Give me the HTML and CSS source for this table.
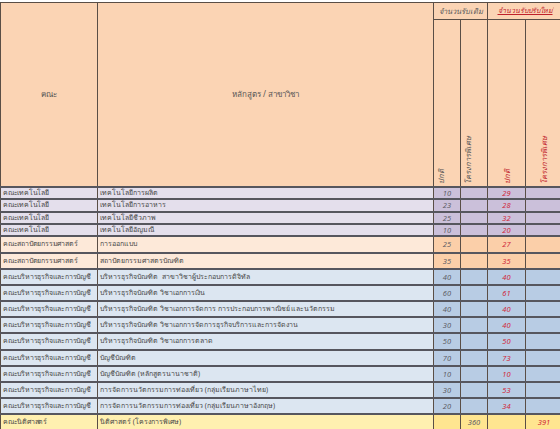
FILE: index.html
```html
<!DOCTYPE html>
<html lang="th">
<head>
<meta charset="utf-8">
<link rel="stylesheet" href="styles.css">
</head>
<body>
<table class="sheet">
  <colgroup>
    <col class="c-fac"><col class="c-prog"><col class="c-num"><col class="c-num"><col class="c-num2"><col class="c-num3">
  </colgroup>
  <thead>
    <tr class="h1">
      <th rowspan="2" class="hd">คณะ</th>
      <th rowspan="2" class="hd">หลักสูตร / สาขาวิชา</th>
      <th colspan="2" class="sub old">จำนวนรับเดิม</th>
      <th colspan="2" class="sub new">จำนวนรับปรับใหม่</th>
    </tr>
    <tr class="h2">
      <th class="vt left"><span>ปกติ</span></th>
      <th class="vt left"><span>โครงการพิเศษ</span></th>
      <th class="vt red"><span>ปกติ</span></th>
      <th class="vt red"><span>โครงการพิเศษ</span></th>
    </tr>
  </thead>
  <tbody>
    <tr class="tech r12"><td class="f">คณะเทคโนโลยี</td><td>เทคโนโลยีการผลิต</td><td class="n">10</td><td class="n"></td><td class="n r">29</td><td class="n"></td></tr>
    <tr class="tech r13"><td class="f">คณะเทคโนโลยี</td><td>เทคโนโลยีการอาหาร</td><td class="n">23</td><td class="n"></td><td class="n r">28</td><td class="n"></td></tr>
    <tr class="tech r12"><td class="f">คณะเทคโนโลยี</td><td>เทคโนโลยีชีวภาพ</td><td class="n">25</td><td class="n"></td><td class="n r">32</td><td class="n"></td></tr>
    <tr class="tech r12"><td class="f">คณะเทคโนโลยี</td><td>เทคโนโลยีอัญมณี</td><td class="n">10</td><td class="n"></td><td class="n r">20</td><td class="n"></td></tr>
    <tr class="arch r17"><td class="f">คณะสถาปัตยกรรมศาสตร์</td><td>การออกแบบ</td><td class="n">25</td><td class="n"></td><td class="n r">27</td><td class="n"></td></tr>
    <tr class="arch r16"><td class="f">คณะสถาปัตยกรรมศาสตร์</td><td>สถาปัตยกรรมศาสตรบัณฑิต</td><td class="n">35</td><td class="n"></td><td class="n r">35</td><td class="n"></td></tr>
    <tr class="acc r16"><td class="f">คณะบริหารธุรกิจและการบัญชี</td><td>บริหารธุรกิจบัณฑิต &nbsp;สาขาวิชาผู้ประกอบการดิจิทัล</td><td class="n">40</td><td class="n"></td><td class="n r">40</td><td class="n"></td></tr>
    <tr class="acc r16"><td class="f">คณะบริหารธุรกิจและการบัญชี</td><td>บริหารธุรกิจบัณฑิต วิชาเอกการเงิน</td><td class="n">60</td><td class="n"></td><td class="n r">61</td><td class="n"></td></tr>
    <tr class="acc r16"><td class="f">คณะบริหารธุรกิจและการบัญชี</td><td>บริหารธุรกิจบัณฑิต วิชาเอกการจัดการ การประกอบการพาณิชย์ และนวัตกรรม</td><td class="n">40</td><td class="n"></td><td class="n r">40</td><td class="n"></td></tr>
    <tr class="acc r16"><td class="f">คณะบริหารธุรกิจและการบัญชี</td><td>บริหารธุรกิจบัณฑิต วิชาเอกการจัดการธุรกิจบริการและการจัดงาน</td><td class="n">30</td><td class="n"></td><td class="n r">40</td><td class="n"></td></tr>
    <tr class="acc r17"><td class="f">คณะบริหารธุรกิจและการบัญชี</td><td>บริหารธุรกิจบัณฑิต วิชาเอกการตลาด</td><td class="n">50</td><td class="n"></td><td class="n r">50</td><td class="n"></td></tr>
    <tr class="acc r16"><td class="f">คณะบริหารธุรกิจและการบัญชี</td><td>บัญชีบัณฑิต</td><td class="n">70</td><td class="n"></td><td class="n r">73</td><td class="n"></td></tr>
    <tr class="acc r16"><td class="f">คณะบริหารธุรกิจและการบัญชี</td><td>บัญชีบัณฑิต (หลักสูตรนานาชาติ)</td><td class="n">10</td><td class="n"></td><td class="n r">10</td><td class="n"></td></tr>
    <tr class="acc r16"><td class="f">คณะบริหารธุรกิจและการบัญชี</td><td>การจัดการนวัตกรรมการท่องเที่ยว (กลุ่มเรียนภาษาไทย)</td><td class="n">30</td><td class="n"></td><td class="n r">53</td><td class="n"></td></tr>
    <tr class="acc r16"><td class="f">คณะบริหารธุรกิจและการบัญชี</td><td>การจัดการนวัตกรรมการท่องเที่ยว (กลุ่มเรียนภาษาอังกฤษ)</td><td class="n">20</td><td class="n"></td><td class="n r">34</td><td class="n"></td></tr>
    <tr class="law r16"><td class="f">คณะนิติศาสตร์</td><td>นิติศาสตร์ (โครงการพิเศษ)</td><td class="n"></td><td class="n">360</td><td class="n"></td><td class="n r">391</td></tr>
  </tbody>
</table>
</body>
</html>
```

FILE: styles.css
```css
html, body {
  margin: 0;
  padding: 0;
  background: #ffffff;
}
body {
  padding-top: 2px;
  font-family: "Noto Sans", "DejaVu Sans", sans-serif;
  color: #474747;
}
.sheet {
  border-collapse: collapse;
  table-layout: fixed;
  width: 562px;
  font-size: 8px;
}
.c-fac { width: 97px; }
.c-prog { width: 336px; }
.c-num { width: 27px; }
.c-num2 { width: 38px; }
.c-num3 { width: 37px; }
.sheet th, .sheet td {
  border: 1px solid #5a4e46;
  padding: 0;
  overflow: hidden;
  white-space: nowrap;
  line-height: 10px;
}
.sheet thead th {
  background: #fbd4b4;
  font-weight: normal;
}
.h1 { height: 17px; }
.h2 { height: 167px; }
.hd { color: #555; }
.sub {
  font-style: italic;
  font-size: 7.5px;
}
.sub.old { color: #5a5a5a; }
.sub.new { color: #c0202a; text-decoration: underline; font-size: 7px; }
.vt {
  vertical-align: bottom;
  font-style: italic;
  padding-bottom: 2px;
  font-size: 7.5px;
}
.vt span {
  display: inline-block;
  writing-mode: vertical-rl;
  transform: rotate(180deg);
}
.vt.left { text-align: left; padding-left: 2px; }
.vt.left span { color: #555; }
.vt.red { text-align: center; }
.vt.red span { color: #c0202a; }
.sheet tbody td {
  border-top: 2px solid #56565e;
  border-bottom: 2px solid #56565e;
  padding-left: 2px;
  font-size: 7px;
}
.sheet tbody td.f { letter-spacing: -0.2px; }
.sheet tbody td.n {
  text-align: center;
  font-style: italic;
  color: #5e5e66;
  padding-left: 0;
  font-size: 7.5px;
}
.sheet tbody td.n.r { color: #d0283a; }
.r12 { height: 12px; }
.r13 { height: 13px; }
.r16 { height: 16px; }
.r17 { height: 17px; }
.tech td { background: #e4dfec; }
.tech td.n { background: #cbc0da; }
.arch td { background: #fde9d9; }
.arch td.n { background: #fbcfa9; }
.acc td { background: #dce6f1; }
.acc td.n { background: #b8cce4; }
.law td { background: #fff0b0; }
.law td.n { background: #ffe590; }
```
